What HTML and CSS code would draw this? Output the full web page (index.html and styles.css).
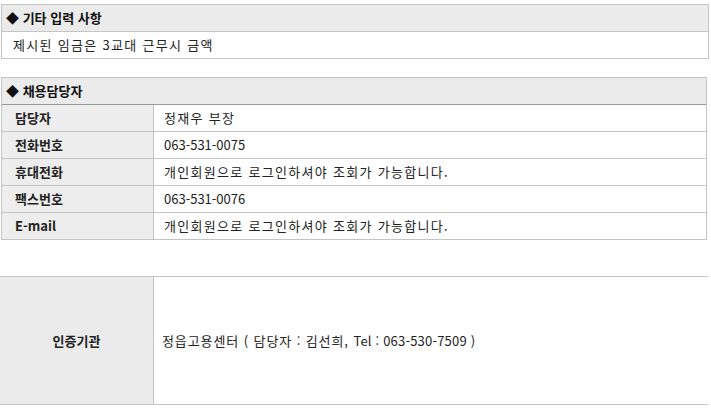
FILE: index.html
```html
<!DOCTYPE html>
<html lang="ko">
<head>
<meta charset="utf-8">
<link rel="stylesheet" href="styles.css">
</head>
<body>
<div class="page">
  <section class="box box-etc">
    <h3 class="box-title">◆ 기타 입력 사항</h3>
    <div class="box-text ko">제시된 임금은 3교대 근무시 금액</div>
  </section>

  <section class="box box-manager">
    <h3 class="box-title dark">◆ 채용담당자</h3>
    <div class="info-row"><div class="label">담당자</div><div class="value ko">정재우 부장</div></div>
    <div class="info-row"><div class="label">전화번호</div><div class="value">063-531-0075</div></div>
    <div class="info-row"><div class="label">휴대전화</div><div class="value ko">개인회원으로 로그인하셔야 조회가 가능합니다.</div></div>
    <div class="info-row"><div class="label">팩스번호</div><div class="value">063-531-0076</div></div>
    <div class="info-row"><div class="label">E-mail</div><div class="value ko">개인회원으로 로그인하셔야 조회가 가능합니다.</div></div>
  </section>

  <section class="cert">
    <div class="cert-label">인증기관</div>
    <div class="cert-value"><span class="ko-mix">정읍고용센터 ( 담당자 : 김선희, </span><span class="lat">Tel : 063-530-7509 )</span></div>
  </section>
</div>
</body>
</html>
```

FILE: styles.css
```css
* { box-sizing: border-box; }
html, body { margin: 0; padding: 0; background: #fff; }
body {
  font-family: "Malgun Gothic", "Noto Sans CJK KR", "Noto Sans", sans-serif;
  font-size: 13px;
  color: #222;
}
.page {
  padding: 4px 0 0 1px;
  width: 709px;
}
.box {
  border: 1px solid #c4c4c4;
  border-bottom: none;
}
.box-etc { width: 708px; }
.box-manager { width: 706px; margin-top: 18px; }
.box-title {
  margin: 0;
  height: 27px;
  line-height: 26px;
  padding-left: 4px;
  font-size: 13px;
  font-weight: bold;
  background: #ebebeb;
  border-bottom: 1px solid #c4c4c4;
  color: #111;
}
.box-title.dark { border-bottom-color: #9a9a9a; }
.box-text {
  height: 27px;
  line-height: 26px;
  padding-left: 11px;
  border-bottom: 1px solid #c4c4c4;
  color: #222;
}
.ko { letter-spacing: 1.3px; }
.ko-mix { letter-spacing: 0.9px; }
.lat { letter-spacing: 0.2px; }
.info-row {
  display: flex;
  height: 27px;
  border-bottom: 1px solid #c4c4c4;
}
.label {
  width: 152px;
  flex: none;
  background: #ededed;
  border-right: 1px solid #c4c4c4;
  padding-left: 13px;
  line-height: 26px;
  font-weight: bold;
  color: #222;
}
.value {
  padding-left: 10px;
  line-height: 26px;
  color: #222;
}
.cert {
  display: flex;
  margin-top: 36px;
  margin-left: -1px;
  width: 708px;
  height: 129px;
  border-top: 1px solid #c4c4c4;
  border-bottom: 1px solid #c4c4c4;
}
.cert-label {
  width: 154px;
  flex: none;
  background: #ebebeb;
  border-right: 1px solid #c4c4c4;
  display: flex;
  align-items: center;
  justify-content: center;
  font-weight: bold;
}
.cert-value {
  display: flex;
  align-items: center;
  padding-left: 8px;
  white-space: pre;
}
```
